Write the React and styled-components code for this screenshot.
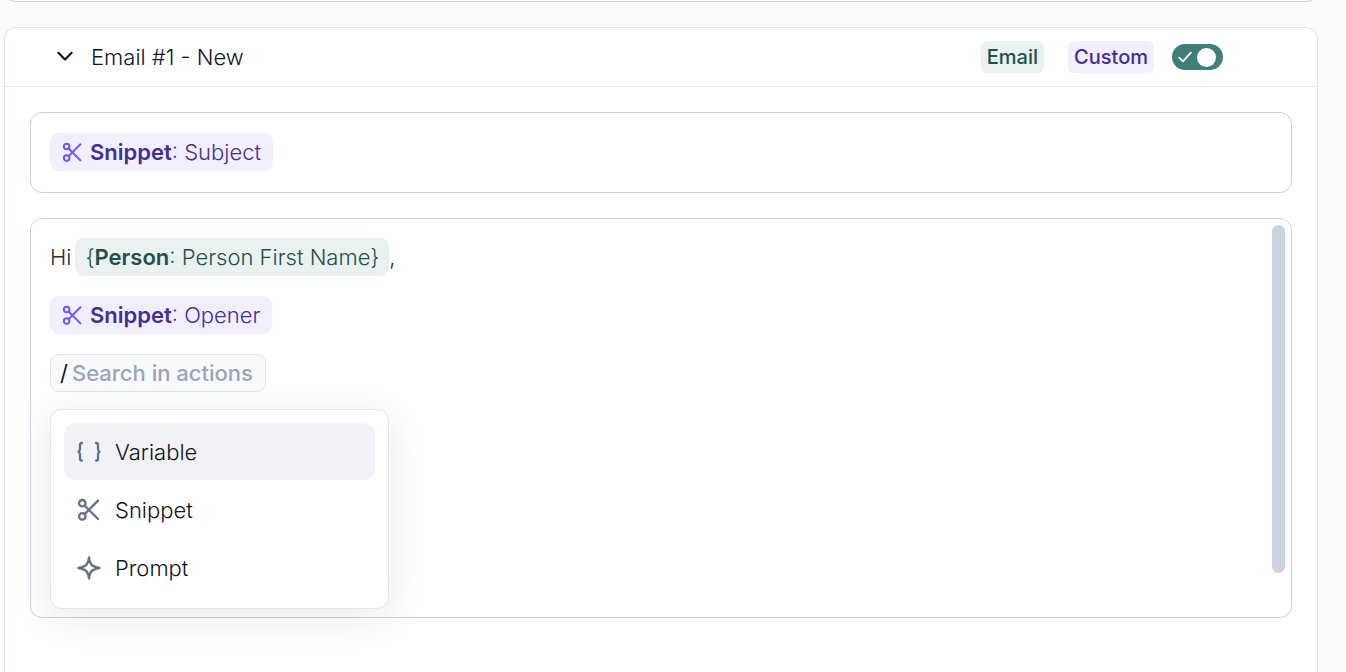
import { useState } from "react";
import styled, { createGlobalStyle } from "styled-components";

const GlobalStyle = createGlobalStyle`
  * {
    box-sizing: border-box;
  }
  body {
    margin: 0;
    background: #fbfbfd;
    color: #14161f;
    font-family: Inter, "Liberation Sans", sans-serif;
    font-size: 22px;
    font-weight: 300;
    line-height: 30px;
    overflow: hidden;
  }
  button,
  input {
    font: inherit;
    color: inherit;
  }
`;

const Page = styled.main`
  display: flex;
  flex-direction: column;
  gap: 25px;
  height: 100vh;
  padding: 0 28px 0 4px;
`;

// tail of the card scrolled out above
const PreviousCard = styled.section`
  flex: none;
  height: 30px;
  margin-top: -28px;
  background: #fff;
  border: 1px solid #cbd2e1;
  border-radius: 12px;
`;

const Card = styled.section`
  flex: 1;
  background: #fff;
  border: 1px solid #e2e5ef;
  border-bottom: 0;
  border-radius: 12px 12px 0 0;
`;

const CardHeader = styled.header`
  display: flex;
  align-items: center;
  height: 59px;
  padding: 0 94px 0 50px;
  border-bottom: 1px solid #e2e7f0;
`;

const CollapseButton = styled.button`
  display: flex;
  padding: 0;
  border: 0;
  background: none;
  cursor: pointer;
`;

const CardTitle = styled.h2`
  flex: 1;
  margin: 0 0 0 16px;
  font-size: 22px;
  font-weight: 300;
`;

const tones = {
  green: { background: "#e9f2f0", color: "#24504a" },
  purple: { background: "#f1eefe", color: "#442f92" },
};

const Badge = styled.span`
  margin-right: ${({ $tone }) => ($tone === "green" ? "24px" : "18px")};
  padding: 1px 6px;
  border-radius: 6px;
  background: ${({ $tone }) => tones[$tone].background};
  color: ${({ $tone }) => tones[$tone].color};
  font-size: 20px;
  font-weight: 500;
`;

const Toggle = styled.label`
  display: flex;
  align-items: center;
  justify-content: space-between;
  width: 51px;
  height: 26px;
  padding: 0 7px 0 6px;
  border-radius: 13px;
  background: ${({ $on }) => ($on ? "#3f7f78" : "#cbd2e1")};
  cursor: pointer;
`;

const ToggleInput = styled.input`
  position: absolute;
  width: 51px;
  height: 26px;
  margin: 0 0 0 -6px;
  opacity: 0;
`;

const ToggleKnob = styled.span`
  order: ${({ $on }) => ($on ? 1 : -1)};
  width: 19px;
  height: 19px;
  border-radius: 50%;
  background: #fff;
`;

const CardBody = styled.div`
  display: flex;
  flex-direction: column;
  gap: 25px;
  padding: 25px;
`;

const Field = styled.div`
  display: flex;
  min-height: ${({ $tall }) => ($tall ? "400px" : "81px")};
  padding: ${({ $tall }) => ($tall ? "6px" : "20px")};
  padding-left: 19px;
  border: 1px solid #cbd0e0;
  border-radius: 12px;
`;

const Lines = styled.div`
  display: flex;
  flex: 1;
  flex-direction: column;
  gap: 20px;
  padding-top: 13px;
`;

const Line = styled.div`
  position: relative;
  display: flex;
  align-items: center;
  height: 38px;
  color: #2a2c35;
`;

const Chip = styled.span`
  display: inline-flex;
  align-items: center;
  height: 38px;
  margin-left: ${({ $inline }) => ($inline ? "4px" : "0")};
  padding: 0 ${({ $inline }) => ($inline ? "10px" : "12px")};
  border-radius: 9px;
  background: ${({ $tone }) => tones[$tone].background};
  color: ${({ $tone }) => tones[$tone].color};
  white-space: pre;

  svg {
    margin-right: 7px;
    color: #7257f5;
  }
  b {
    font-weight: 600;
  }
`;

const SearchBox = styled.label`
  display: flex;
  align-items: center;
  gap: 4px;
  height: 38px;
  padding: 0 9px;
  border: 1px solid #e0e5ee;
  border-radius: 9px;
  background: #f8fafd;
  color: #14161f;
  font-weight: 400;
`;

const SearchInput = styled.input`
  width: 184px;
  padding: 0;
  border: 0;
  outline: 0;
  background: none;
  font-weight: 500;

  &::placeholder {
    color: #99a5bd;
    opacity: 1;
  }
`;

const ActionMenu = styled.div`
  position: absolute;
  top: 55px;
  left: 0;
  display: flex;
  flex-direction: column;
  gap: 1px;
  width: 339px;
  padding: 13px 13px 12px;
  border: 1px solid #e2e4ef;
  border-radius: 12px;
  background: #fff;
  box-shadow: 0 8px 40px rgba(0, 0, 0, 0.09);
`;

const ActionItem = styled.button`
  display: flex;
  align-items: center;
  gap: 14px;
  width: 100%;
  height: 57px;
  padding: 0 13px;
  border: 0;
  border-radius: 12px;
  background: ${({ $active }) => ($active ? "#f1f2f8" : "none")};
  color: #101218;
  text-align: left;
  cursor: pointer;

  svg {
    color: #657089;
  }
`;

const ScrollThumb = styled.div`
  width: 13px;
  height: 348px;
  border-radius: 7px;
  background: #cbd1e0;
`;

function Icon({ size = 24, stroke = 2.3, children }) {
  return (
    <svg
      width={size}
      height={size}
      viewBox="0 0 24 24"
      fill="none"
      stroke="currentColor"
      strokeWidth={stroke}
      strokeLinecap="round"
      strokeLinejoin="round"
      aria-hidden="true"
    >
      {children}
    </svg>
  );
}

function ScissorsIcon({ size, stroke }) {
  return (
    <Icon size={size} stroke={stroke}>
      <circle cx="5.3" cy="5.2" r="3.2" />
      <circle cx="5.3" cy="18.4" r="3.2" />
      <path d="M7.6 7.5 21 21M21 2.6 7.6 16.1" />
    </Icon>
  );
}

function BracesIcon() {
  return (
    <Icon>
      <path d="M5 3C3.4 3 3 3.8 3 5.2v3.9c0 1.300-.5 2.200-1.600 2.700 1.100.5 1.600 1.400 1.600 2.700v3.900C3 19.800 3.400 20.600 5 20.600" />
      <path d="M19 3c1.600 0 2 .8 2 2.200v3.900c0 1.300.5 2.200 1.600 2.700-1.100.5-1.600 1.400-1.600 2.700v3.900c0 1.400-.4 2.200-2 2.200" />
    </Icon>
  );
}

function SparkIcon() {
  return (
    <Icon>
      <path d="M12 1.500c.7 6.500 2.500 9 10.500 10.500C14.500 13.500 12.700 16 12 22.500 11.300 16 9.500 13.500 1.500 12 9.500 10.500 11.300 8 12 1.500Z" />
    </Icon>
  );
}

const actions = [
  { label: "Variable", icon: <BracesIcon /> },
  { label: "Snippet", icon: <ScissorsIcon /> },
  { label: "Prompt", icon: <SparkIcon /> },
];

function SnippetChip({ name }) {
  return (
    <Chip $tone="purple">
      <ScissorsIcon size={21} />
      <b>Snippet</b>: {name}
    </Chip>
  );
}

export default function App() {
  const [enabled, setEnabled] = useState(true);
  const [active, setActive] = useState("Variable");

  return (
    <>
      <GlobalStyle />
      <Page>
        <PreviousCard />
        <Card>
          <CardHeader>
            <CollapseButton type="button" aria-label="Collapse">
              <Icon size={20} stroke={2.6}>
                <path d="m4 7 8 8 8-8" />
              </Icon>
            </CollapseButton>
            <CardTitle>Email #1 - New</CardTitle>
            <Badge $tone="green">Email</Badge>
            <Badge $tone="purple">Custom</Badge>
            <Toggle $on={enabled}>
              <ToggleInput
                type="checkbox"
                aria-label="Enabled"
                checked={enabled}
                onChange={(e) => setEnabled(e.target.checked)}
              />
              <Icon size={14} stroke={3}>
                <path d="m2 13 6.500 6.500L22 4.500" stroke="#fff" />
              </Icon>
              <ToggleKnob $on={enabled} />
            </Toggle>
          </CardHeader>
          <CardBody>
            <Field>
              <SnippetChip name="Subject" />
            </Field>
            <Field $tall>
              <Lines>
                <Line>
                  Hi
                  <Chip $tone="green" $inline>
                    {"{"}
                    <b>Person</b>: Person First Name{"}"}
                  </Chip>
                  ,
                </Line>
                <Line>
                  <SnippetChip name="Opener" />
                </Line>
                <Line>
                  <SearchBox>
                    /
                    <SearchInput type="text" placeholder="Search in actions" />
                  </SearchBox>
                  <ActionMenu>
                    {actions.map(({ label, icon }) => (
                      <ActionItem
                        key={label}
                        type="button"
                        $active={label === active}
                        onMouseEnter={() => setActive(label)}
                      >
                        {icon}
                        {label}
                      </ActionItem>
                    ))}
                  </ActionMenu>
                </Line>
              </Lines>
              <ScrollThumb />
            </Field>
          </CardBody>
        </Card>
      </Page>
    </>
  );
}
